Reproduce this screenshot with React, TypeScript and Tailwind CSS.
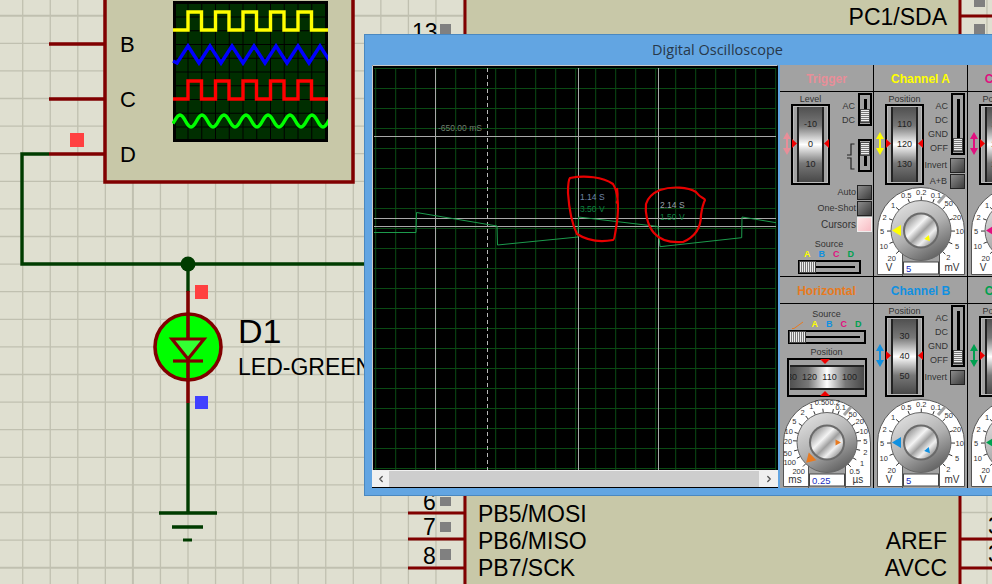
import { ChevronLeft, ChevronRight } from 'lucide-react';

const GRID_X = Array.from({ length: 36 }, (_, i) => 22.7 + i * 27.55);
const GRID_Y = Array.from({ length: 21 }, (_, i) => 15.7 + i * 27.6);
const WIRE = '#003c00';
const PIN = '#800000';

const range = (n: number) => Array.from({ length: n }, (_, i) => i);

const square = (x0: number, low: number, high: number) =>
  'M173 ' + low + ' H' + x0 + range(5).map(i => ` V${high} H${x0 + 13.5 + i * 27.5} V${low} H${x0 + 27.5 + i * 27.5}`).join('');

const triangle = range(8).map(i => `${188 + i * 22 - 11},63 ${188 + i * 22},46`).join(' ');
const sine = range(160).map(i => `${173 + i},${121 - 6 * Math.cos(((173 + i - 180) / 22) * 2 * Math.PI)}`).join(' ');

function Schematic() {
  return (
    <svg className="absolute inset-0" width={992} height={584} fill="none">
      {GRID_X.map((x, i) => (
        <line key={x} x1={x} x2={x} y1={0} y2={584} stroke="#c0c0b0" strokeWidth={i === 4 ? 2 : 1.3} />
      ))}
      {GRID_Y.map((y, i) => (
        <line key={y} y1={y} y2={y} x1={0} x2={992} stroke="#c0c0b0" strokeWidth={i === 0 || i === 20 ? 2 : 1.3} />
      ))}

      {/* instrument block */}
      <rect x={105} y={-10} width={248} height={192} fill="#c8c8a8" stroke={PIN} strokeWidth={3.5} />
      <path d="M49 44H105M49 99H105M49 154H105" stroke={PIN} strokeWidth={3.5} />
      <rect x={174.5} y={2.5} width={152} height={138} fill="#002e00" stroke="#000" strokeWidth={3} />
      {range(11).map(i => (
        <line key={i} x1={188 + i * 13.75} x2={188 + i * 13.75} y1={3} y2={140} stroke="#000" />
      ))}
      {range(9).map(i => (
        <line key={i} y1={17 + i * 13.75} y2={17 + i * 13.75} x1={175} x2={326} stroke="#000" />
      ))}
      <clipPath id="mini-screen">
        <rect x={172} y={0} width={156} height={142} />
      </clipPath>
      <g clipPath="url(#mini-screen)" strokeWidth={3.4}>
        <path d={square(188, 30, 12) + ' H330'} stroke="#ffff00" />
        <polyline points={'173,61 ' + triangle} stroke="#0000ff" />
        <path d={square(188, 99, 81) + ' H330'} stroke="#ff0000" />
        <polyline points={sine} stroke="#00ff00" />
      </g>

      {/* wires */}
      <path d="M49 154H22V264H364M188 264V292M188 403V513" stroke={WIRE} strokeWidth={3.4} />
      <circle cx={188} cy={264} r={7.5} fill={WIRE} />
      <path d="M159 513H217M172 527H203" stroke={WIRE} strokeWidth={3.6} />
      <path d="M183 540H192" stroke={WIRE} strokeWidth={3} />

      {/* LED */}
      <circle cx={188} cy={347} r={33} fill="#00ff00" stroke={PIN} strokeWidth={3.6} />
      <path d="M188 291V403" stroke={PIN} strokeWidth={3.6} />
      <path d="M172 339H204L188 359Z" fill="#33ff33" stroke={PIN} strokeWidth={3.2} />
      <path d="M173 361H203" stroke={PIN} strokeWidth={3.2} />

      <rect x={70} y={133} width={14} height={14} fill="#ff4040" />
      <rect x={195} y={285} width={13} height={14} fill="#ff4040" />
      <rect x={195} y={396} width={13} height={13} fill="#4040ff" />

      <g fill="#000" stroke="none" fontSize={22}>
        <text x={120} y={52}>B</text>
        <text x={120} y={107}>C</text>
        <text x={120} y={162}>D</text>
        <text x={238} y={343} fontSize={34}>D1</text>
        <text x={238} y={375} fontSize={23}>LED-GREEN</text>
      </g>

      {/* microcontroller */}
      <rect x={465} y={-10} width={495} height={610} fill="#c8c8a8" stroke={PIN} strokeWidth={3} />
      <path d="M408 513H465M408 539H465M408 568H465M960 16H992M960 539H992M960 568H992" stroke={PIN} strokeWidth={3} />
      <g fill="#808080">
        <rect x={440} y={24} width={11} height={11} />
        <rect x={440} y={497} width={11} height={9} />
        <rect x={440} y={522} width={11} height={10} />
        <rect x={440} y={549} width={11} height={11} />
        <rect x={974} y={-2} width={11} height={9} />
        <rect x={974} y={24} width={11} height={11} />
      </g>
      <g fill="#000" fontSize={23}>
        <text x={412} y={40}>13</text>
        <text x={423} y={510}>6</text>
        <text x={423} y={535}>7</text>
        <text x={423} y={564}>8</text>
        <text x={478} y={522}>PB5/MOSI</text>
        <text x={478} y={549}>PB6/MISO</text>
        <text x={478} y={576}>PB7/SCK</text>
        <text x={947} y={25} textAnchor="end">PC1/SDA</text>
        <text x={947} y={549} textAnchor="end">AREF</text>
        <text x={947} y={576} textAnchor="end">AVCC</text>
        <text x={988} y={534}>3</text>
        <text x={988} y={562}>3</text>
      </g>
    </svg>
  );
}

function ScopeScreen() {
  return (
    <svg width={406} height={405} className="block" fill="none">
      <g transform="translate(-372 -65)">
        <rect x={372} y={65} width={406} height={405} fill="#000" />
        <path d="M372.5 470V65.5H777.5" stroke="#c8c8c8" />
        {range(21).map(i => (
          <line key={i} x1={375.7 + i * 20} x2={375.7 + i * 20} y1={68} y2={470} stroke="#0a4a14" />
        ))}
        {range(21).map(i => (
          <line key={i} y1={68.5 + i * 20} y2={68.5 + i * 20} x1={374} x2={776} stroke="#0a4a14" />
        ))}
        <path d="M435.5 68V470M578.5 68V470M658.5 68V470M374 136.5H776M374 218.5H776M374 226.5H776" stroke="#a8a8a8" />
        <path d="M487.5 68V470" stroke="#b8b8b8" strokeDasharray="4 3" />
        <polyline
          points="374,232.5 416,232.5 416.5,212.5 497,226 497.5,245 578,237 578.5,217 658,226.5 660,246.7 741.7,237.7 742,217 776,222.7"
          stroke="#1c9a4c"
        />
        <g fontSize={8.5}>
          <text x={438} y={131} fill="#6f7f6f">-650.00 mS</text>
          <text x={580} y={200} fill="#6f86a8">1.14 S</text>
          <text x={580} y={212} fill="#0e8040">3.50 V</text>
          <text x={660} y={208} fill="#9aa0a8">2.14 S</text>
          <text x={660} y={220} fill="#0e8040">1.50 V</text>
        </g>
        <path
          d="M570 178C585 175 603 177 613 184C618 192 619 205 617 222C615 235 614 240 613 240C602 242 588 241 577 234C572 224 569 208 568 193C568 185 568 180 570 178ZM617 188C618 196 618 202 616 203"
          stroke="#e80000"
          strokeWidth={2.2}
        />
        <path
          d="M660 190C672 186 688 187 696 192C700 198 705 198 705 200C703 204 702 208 701 215C701 228 695 237 683 242C670 243 660 240 654 233C647 225 645 212 646 204C648 197 653 193 660 190Z"
          stroke="#e80000"
          strokeWidth={2.2}
        />
      </g>
    </svg>
  );
}

function ScrollBar() {
  return (
    <div className="flex h-[18px] items-center border-b border-black bg-[#f0f0f0] text-[#505050]">
      <div className="flex w-[17px] justify-center">
        <ChevronLeft size={10} strokeWidth={3} />
      </div>
      <div className="h-[16px] w-[370px] bg-[#cdcdcd]" />
      <div className="flex w-[19px] justify-center">
        <ChevronRight size={10} strokeWidth={3} />
      </div>
    </div>
  );
}

function Panel({ title, color, children }: { title: string; color: string; children: React.ReactNode }) {
  return (
    <div className="flex h-[211px] w-[93px] flex-col overflow-hidden bg-[#a2a2a2]">
      <div className="flex h-[27px] flex-none items-center justify-center border-b border-black pt-[2px] text-[12px] font-bold whitespace-nowrap" style={{ color }}>
        {title}
      </div>
      {children}
    </div>
  );
}

function UpDown({ color }: { color: string }) {
  return (
    <svg width={8} height={23} viewBox="0 0 8 23" fill={color}>
      <path d="M4 0L8 7H5V16H8L4 23L0 16H3V7H0Z" />
    </svg>
  );
}

function VertDrum({ labels }: { labels: string[] }) {
  return (
    <div className="relative flex h-[81px] w-[39px] flex-none justify-center border-2 border-black bg-[#a2a2a2] shadow-[inset_0_0_0_1px_#bbbbbb]">
      <div className="my-[1px] flex h-[75px] w-[27px] flex-col items-center justify-center border-x-2 border-[#222] bg-[linear-gradient(#505050,#787878_25%,#ffffff_50%,#787878_75%,#484848)] text-[9px] text-[#222]">
        {labels.map(l => (
          <div key={l} className="flex h-[20px] items-center">
            {l}
          </div>
        ))}
      </div>
      <svg className="absolute top-[33px] -left-[1px]" width={5} height={9}>
        <path d="M0 0L5 4.5L0 9Z" fill="#f00000" />
      </svg>
      <svg className="absolute top-[33px] -right-[1px]" width={5} height={9}>
        <path d="M5 0L0 4.5L5 9Z" fill="#f00000" />
      </svg>
    </div>
  );
}

function Stripes() {
  return <div className="h-full w-full border border-[#444] bg-[repeating-linear-gradient(#eeeeee_0,#eeeeee_1px,#777777_1px,#777777_2px)]" />;
}

function VSlider({ height, thumb }: { height: number; thumb: 'top' | 'bottom' }) {
  return (
    <div className="relative flex w-[14px] flex-none justify-center border-2 border-black py-[4px]" style={{ height }}>
      <div className="w-[3px] bg-black" />
      <div className={thumb === 'bottom' ? 'absolute bottom-[1px] left-0 h-[14px] w-[10px]' : 'absolute top-[1px] left-0 h-[14px] w-[10px]'}>
        <Stripes />
      </div>
    </div>
  );
}

function HSlider({ width }: { width: number }) {
  return (
    <div className="relative flex h-[14px] flex-none items-center border-2 border-black px-[4px]" style={{ width }}>
      <div className="h-[2px] w-full bg-black" />
      <div className="absolute top-0 left-0 h-[10px] w-[15px] bg-[repeating-linear-gradient(90deg,#eeeeee_0,#eeeeee_1px,#777777_1px,#777777_2px)] outline outline-[#444]" />
    </div>
  );
}

function Btn({ pink }: { pink?: boolean }) {
  return (
    <div
      className={
        pink
          ? 'h-[15px] w-[15px] flex-none border border-[#eee] bg-[linear-gradient(135deg,#ffe8e8,#f8bcc4)]'
          : 'h-[15px] w-[15px] flex-none border border-[#222] bg-[linear-gradient(135deg,#8c8c8c,#3c3c3c)]'
      }
    />
  );
}

type Tick = [string, number, number];

const V_TICKS: Tick[] = [
  ['0.5', 393, 403], ['0.2', 438, 395], ['0.1', 482, 403], ['1', 353, 432], ['2', 328, 470], ['5', 320, 512],
  ['10', 325, 556], ['20', 349, 592], ['50', 520, 428], ['20', 545, 470], ['10', 553, 512], ['5', 545, 556], ['2', 519, 590],
];

const H_TICKS: Tick[] = [
  ['0.1', 196, 397], ['0.2', 178, 382], ['0.50', 140, 382], ['1', 108, 392], ['2', 82, 412], ['5', 57, 437], ['10', 40, 467],
  ['20', 38, 497], ['50', 37, 533], ['100', 43, 562], ['200', 70, 588], ['50', 232, 418], ['20', 253, 437], ['10', 265, 467],
  ['5', 270, 497], ['2', 270, 530], ['1', 260, 565], ['0.5', 238, 588],
];

function Dial({
  color, ticks, origin, unitL, unitR, value, big, small,
}: {
  color: string; ticks: Tick[]; origin: [number, number]; unitL: string; unitR: string; value: string; big: number; small: number;
}) {
  const cx = 45;
  const cy = 44.5;
  return (
    <svg width={90} height={90} className="mx-auto block flex-none">
      <defs>
        <linearGradient id="knob" x1="0.2" y1="0.05" x2="0.75" y2="1">
          <stop offset="0" stopColor="#dedede" />
          <stop offset="0.5" stopColor="#b0b0b0" />
          <stop offset="1" stopColor="#5c5c5c" />
        </linearGradient>
        <linearGradient id="cap" x1="0.1" y1="0.1" x2="0.9" y2="0.9">
          <stop offset="0" stopColor="#909090" />
          <stop offset="0.35" stopColor="#f4f4f4" />
          <stop offset="0.55" stopColor="#a0a0a0" />
          <stop offset="0.75" stopColor="#f0f0f0" />
          <stop offset="1" stopColor="#8c8c8c" />
        </linearGradient>
      </defs>
      <path d="M1.5 88.5V45A43.5 43.5 0 0 1 88.5 45V88.5Z" fill="#fff" stroke="#555" />
      <path d="M26.5 90V66H63.5V90" fill="#a2a2a2" stroke="#555" />
      <path d="M62 17L69 9" stroke="#a2a2a2" strokeWidth={3} />
      {ticks.map(([t, zx, zy], i) => {
        const dx = (zx - origin[0]) / 3;
        const dy = (zy - origin[1]) / 3;
        const len = Math.hypot(dx, dy);
        return (
          <g key={t + i}>
            <line x1={cx + (dx / len) * 30} y1={cy + (dy / len) * 30} x2={cx + (dx / len) * 34} y2={cy + (dy / len) * 34} stroke="#333" />
            <text x={cx + dx} y={cy + dy + 3} textAnchor="middle" fontSize={7.5} fill="#333">
              {t}
            </text>
          </g>
        );
      })}
      <circle cx={cx} cy={cy} r={30} fill="url(#knob)" stroke="#666" />
      <circle cx={cx} cy={cy} r={18} fill="#6a6a6a" />
      <circle cx={cx} cy={cy} r={16} fill="url(#cap)" />
      <g transform={`rotate(${big} ${cx} ${cy})`}>
        <path d={`M${cx - 29} ${cy}L${cx - 20} ${cy - 5.5}V${cy + 5.5}Z`} fill={color} />
      </g>
      <g transform={`rotate(${small} ${cx} ${cy})`}>
        <path d={`M${cx - 14} ${cy}L${cx - 8.5} ${cy - 3}V${cy + 3}Z`} fill={color} />
      </g>
      <rect x={27.5} y={76} width={35} height={12} fill="#fff" stroke="#444" />
      <text x={30} y={85.5} fontSize={9.5} fill="#2030c0">
        {value}
      </text>
      <text x={13} y={85} fontSize={10} textAnchor="middle" fill="#333">
        {unitL}
      </text>
      <text x={76} y={85} fontSize={10} textAnchor="middle" fill="#333">
        {unitR}
      </text>
    </svg>
  );
}

function ChannelBody({ color, labels, invertOnly }: { color: string; labels: string[]; invertOnly?: boolean }) {
  return (
    <div className="flex flex-1 flex-col">
      <div className="flex h-[94px] flex-none pl-[2px]">
        <div className="flex w-[9px] flex-none flex-col items-start pt-[40px]">
          <UpDown color={color} />
        </div>
        <div className="flex flex-col items-center">
          <div className="h-[12px] text-[9px] leading-[14px] text-[#333]">Position</div>
          <VertDrum labels={labels} />
        </div>
        <div className="flex h-[98px] flex-1 flex-col items-end pr-[2px]">
          <div className="flex items-start gap-[3px] pt-[1px]">
            <div className="flex flex-col items-end pt-[6px] text-[9px] leading-[14px] text-[#333]">
              <div>AC</div>
              <div>DC</div>
              <div>GND</div>
              <div>OFF</div>
            </div>
            <VSlider height={62} thumb="bottom" />
          </div>
          <div className="mt-[3px] flex items-center gap-[3px] text-[9px] text-[#333]">
            Invert
            <Btn />
          </div>
          {!invertOnly && (
            <div className="mt-[1px] flex items-center gap-[3px] text-[9px] text-[#333]">
              A+B
              <Btn />
            </div>
          )}
        </div>
      </div>
      <Dial color={color} ticks={V_TICKS} origin={[437, 510]} unitL="V" unitR="mV" value="5" big={0} small={230} />
    </div>
  );
}

function TriggerBody() {
  return (
    <div className="flex flex-1 flex-col">
      <div className="flex h-[93px] flex-none pl-[3px]">
        <div className="flex w-[8px] flex-none flex-col pt-[40px]">
          <UpDown color="#e88e98" />
        </div>
        <div className="flex flex-col items-center">
          <div className="h-[12px] text-[9px] leading-[14px] text-[#333]">Level</div>
          <VertDrum labels={['-10', '0', '10']} />
        </div>
        <div className="flex flex-1 flex-col items-end pt-[1px] pr-[1px]">
          <div className="flex gap-[3px]">
            <div className="flex flex-col items-end pt-[6px] text-[9px] leading-[14px] text-[#333]">
              <div>AC</div>
              <div>DC</div>
            </div>
            <VSlider height={33} thumb="bottom" />
          </div>
          <div className="mt-[12px] flex items-center gap-[3px]">
            <svg width={9} height={30} fill="none" stroke="#222" strokeWidth={1.2}>
              <path d="M8.5 3H5V14H1M1 17H5V28H8.5" />
            </svg>
            <VSlider height={33} thumb="top" />
          </div>
        </div>
      </div>
      <div className="flex flex-col items-end gap-[1px] pr-[1px] text-[9px] text-[#333]">
        <div className="flex items-center gap-[1px]">Auto<Btn /></div>
        <div className="flex items-center gap-[1px]">One-Shot<Btn /></div>
        <div className="flex items-center gap-[1px] text-[10px]">Cursors<Btn pink /></div>
      </div>
      <div className="mt-[6px] ml-[5px] flex flex-col items-center">
        <div className="text-[9px] leading-[12px] text-[#333]">Source</div>
        <div className="flex h-[10px] items-center gap-[8px] text-[9px] font-bold">
          <span className="text-[#ffff00]">A</span>
          <span className="text-[#1090e0]">B</span>
          <span className="text-[#e0107f]">C</span>
          <span className="text-[#00a050]">D</span>
        </div>
        <HSlider width={63} />
      </div>
    </div>
  );
}

function HorizontalBody() {
  return (
    <div className="flex flex-1 flex-col items-center">
      <div className="mt-[4px] text-[9px] leading-[12px] text-[#333]">Source</div>
      <div className="flex h-[10px] items-center gap-[8px] text-[9px] font-bold">
        <svg width={12} height={8} fill="none" stroke="#e87a20" strokeWidth={1}>
          <path d="M0 7.5H2L11 1" />
        </svg>
        <span className="text-[#ffff00]">A</span>
        <span className="text-[#1090e0]">B</span>
        <span className="text-[#e0107f]">C</span>
        <span className="text-[#00a050]">D</span>
      </div>
      <HSlider width={78} />
      <div className="mt-[2px] h-[12px] text-[9px] leading-[12px] text-[#333]">Position</div>
      <div className="relative flex h-[39px] w-[80px] flex-none flex-col justify-center border-2 border-black">
        <div className="mx-[1px] flex h-[25px] overflow-hidden border-y-2 border-[#222] bg-[linear-gradient(90deg,#505050,#787878_25%,#ffffff_50%,#787878_75%,#484848)] text-[9px] text-[#222]">
          <div className="-ml-[10px] flex flex-none">
            {['130', '120', '110', '100'].map(l => (
              <div key={l} className="flex w-[20px] flex-none items-center justify-center">
                {l}
              </div>
            ))}
          </div>
        </div>
        <svg className="absolute -top-[1px] left-[31px]" width={10} height={5}>
          <path d="M0 0H10L5 5Z" fill="#f00000" />
        </svg>
        <svg className="absolute -bottom-[1px] left-[31px]" width={10} height={5}>
          <path d="M0 5H10L5 0Z" fill="#f00000" />
        </svg>
      </div>
      <div className="mt-[1px]">
        <Dial color="#e87a20" ticks={H_TICKS} origin={[155, 503]} unitL="ms" unitR="µs" value="0.25" big={-44} small={180} />
      </div>
    </div>
  );
}

function ScopeWindow() {
  return (
    <div className="absolute top-[34px] left-[364px] w-[700px] border border-[#4a88c0] bg-[#62a5e2] pb-[7px] pl-[7px]">
      <div className="flex h-[30px] items-center justify-center font-['Open_Sans',sans-serif] text-[14.5px] text-[#27384a]">
        Digital Oscilloscope
      </div>
      <div className="flex">
        <div className="flex w-[406px] flex-none flex-col">
          <ScopeScreen />
          <ScrollBar />
        </div>
        <div className="ml-[2px] grid grid-cols-[93px_93px_93px] gap-[1px] bg-black">
          <Panel title="Trigger" color="#e88e98">
            <TriggerBody />
          </Panel>
          <Panel title="Channel A" color="#ffff00">
            <ChannelBody color="#ffff00" labels={['110', '120', '130']} />
          </Panel>
          <Panel title="Channel C" color="#e0107f">
            <ChannelBody color="#e0107f" labels={['110', '120', '130']} />
          </Panel>
          <Panel title="Horizontal" color="#e87a20">
            <HorizontalBody />
          </Panel>
          <Panel title="Channel B" color="#1090e0">
            <ChannelBody color="#1090e0" labels={['30', '40', '50']} invertOnly />
          </Panel>
          <Panel title="Channel D" color="#00a050">
            <ChannelBody color="#00a050" labels={['30', '40', '50']} invertOnly />
          </Panel>
        </div>
      </div>
    </div>
  );
}

export default function App() {
  return (
    <div className="relative h-[584px] w-[992px] overflow-hidden bg-[#dfdfd0] font-['Liberation_Sans',Arial,sans-serif]">
      <Schematic />
      <ScopeWindow />
    </div>
  );
}
